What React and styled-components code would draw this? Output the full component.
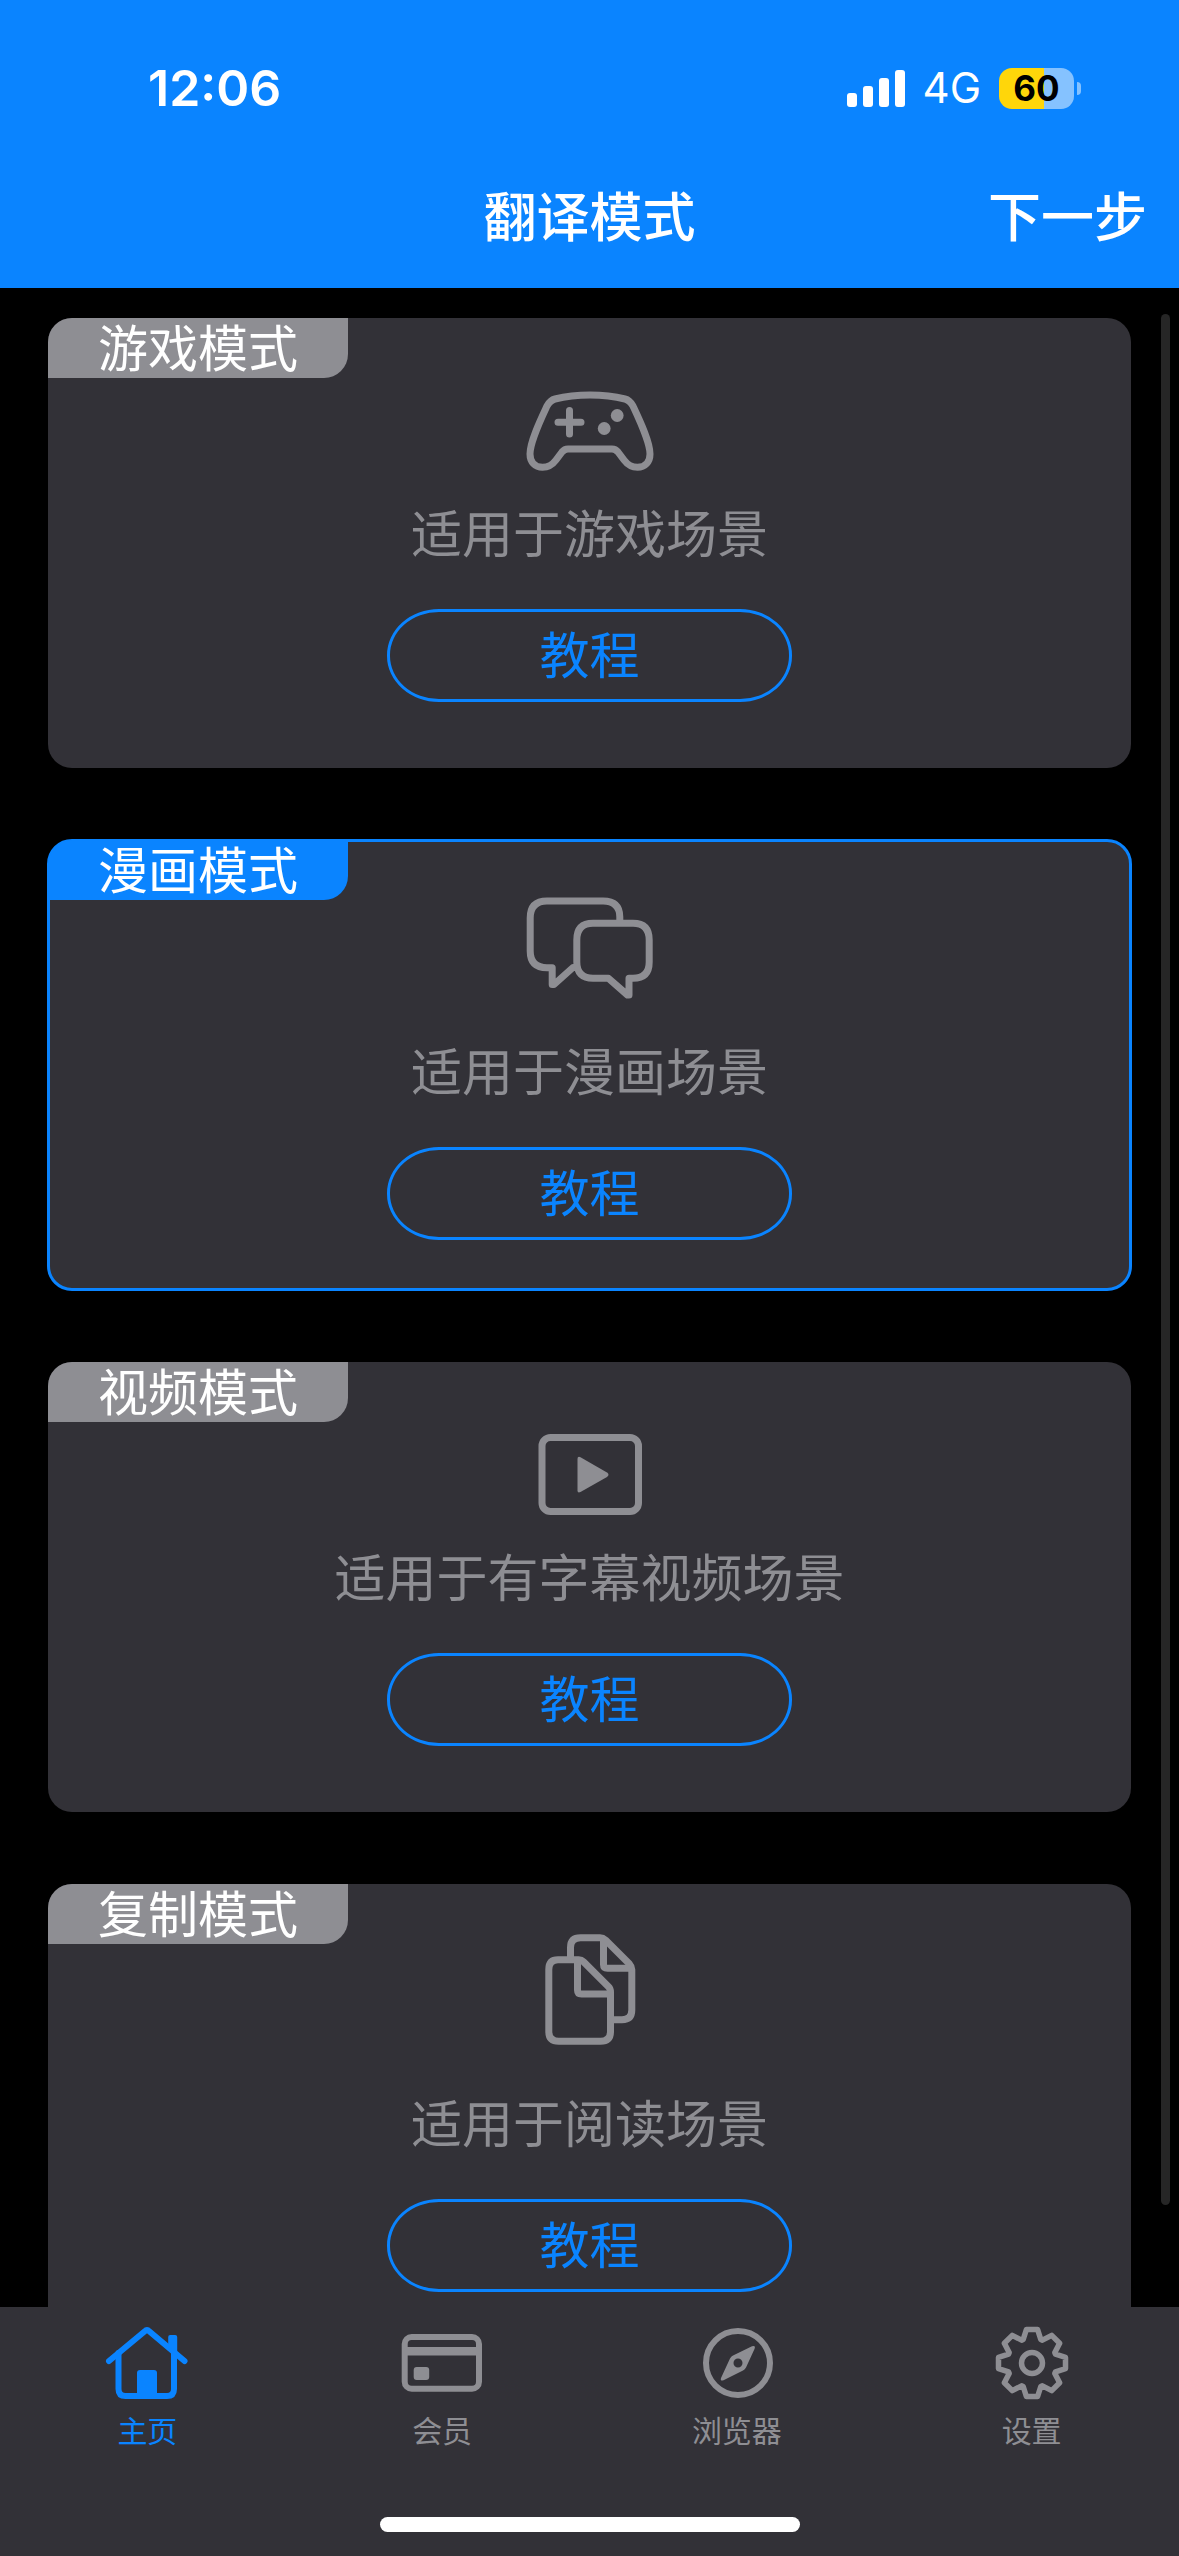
import { useState } from "react";
import styled, { createGlobalStyle } from "styled-components";

const BLUE = "#0a84ff";
const GRAY = "#8e8e93";
const PANEL = "#323137";

const GlobalStyle = createGlobalStyle`
  * {
    box-sizing: border-box;
  }
  body {
    margin: 0;
    background: #000;
    font-family: Inter, "Noto Sans CJK SC", sans-serif;
  }
  button {
    font-family: inherit;
    background: none;
    border: none;
    padding: 0;
    cursor: pointer;
  }
`;

const Screen = styled.div`
  display: flex;
  flex-direction: column;
  height: 100vh;
  overflow: hidden;
`;

const Header = styled.header`
  flex: none;
  background: ${BLUE};
  color: #fff;
`;

const StatusBar = styled.div`
  display: flex;
  align-items: center;
  justify-content: space-between;
  height: 176px;
  padding: 0 98px 0 148px;
`;

const Time = styled.span`
  font-size: 50px;
  line-height: 60px;
  font-weight: 600;
`;

const StatusIcons = styled.div`
  display: flex;
  align-items: center;
  gap: 18px;
`;

const Network = styled.span`
  font-size: 42px;
  line-height: 48px;
`;

const Battery = styled.div`
  display: flex;
  align-items: center;
  gap: 3px;
`;

const BatteryBody = styled.span`
  display: flex;
  align-items: center;
  justify-content: center;
  width: 75px;
  height: 41px;
  border-radius: 13px;
  background: linear-gradient(
    to right,
    #ffd60a ${(p) => p.$level}%,
    #85c2ff ${(p) => p.$level}%
  );
  color: #000;
  font-size: 35px;
  line-height: 41px;
  font-weight: 700;
`;

const BatteryNub = styled.span`
  width: 4px;
  height: 13px;
  border-radius: 0 4px 4px 0;
  background: #85c2ff;
`;

const TitleBar = styled.div`
  display: grid;
  grid-template-columns: 1fr auto 1fr;
  align-items: center;
  height: 84px;
  margin-bottom: 28px;
  padding: 0 32px;
`;

const Title = styled.h1`
  grid-column: 2;
  margin: 0;
  font-size: 53px;
  line-height: 84px;
  font-weight: 500;
`;

const NextButton = styled.button`
  justify-self: end;
  color: #fff;
  font-size: 53px;
  line-height: 84px;
  font-weight: 500;
`;

const Main = styled.main`
  position: relative;
  flex: 1;
  min-height: 0;
  overflow: hidden;
`;

const CardList = styled.div`
  display: flex;
  flex-direction: column;
  gap: 72px;
  padding: 30px 48px;
`;

const ScrollThumb = styled.div`
  position: absolute;
  top: 26px;
  right: 9px;
  bottom: 102px;
  width: 9px;
  border-radius: 5px;
  background: #262626;
`;

const Card = styled.section`
  position: relative;
  display: flex;
  flex-direction: column;
  align-items: center;
  justify-content: center;
  min-height: 450px;
  border-radius: 24px;
  background: ${PANEL};
  color: ${GRAY};
  outline: ${(p) => (p.$selected ? `3px solid ${BLUE}` : "none")};
  outline-offset: -2px;
`;

const CardTag = styled.h2`
  position: absolute;
  top: 0;
  left: 0;
  width: 300px;
  height: 60px;
  margin: 0;
  border-radius: 24px 0 24px 0;
  background: ${(p) => (p.$selected ? BLUE : GRAY)};
  color: #fff;
  font-size: 50px;
  line-height: 63px;
  font-weight: 400;
  text-align: center;
`;

const CardText = styled.p`
  margin: 25px 0 44px;
  font-size: 51px;
  line-height: 60px;
`;

const TutorialButton = styled.button`
  width: 405px;
  height: 93px;
  border: 3px solid ${BLUE};
  border-radius: 52px / 46px;
  color: ${BLUE};
  font-size: 50px;
  line-height: 60px;
`;

const Footer = styled.footer`
  display: flex;
  flex-direction: column;
  justify-content: space-between;
  align-items: center;
  flex: none;
  height: 249px;
  padding: 14px 0 24px;
  background: ${PANEL};
`;

const Tabs = styled.nav`
  display: grid;
  grid-template-columns: repeat(4, 1fr);
  width: 100%;
`;

const Tab = styled.a`
  display: flex;
  flex-direction: column;
  align-items: center;
  gap: 8px;
  color: ${(p) => (p.$active ? BLUE : GRAY)};
  font-size: 30px;
  line-height: 36px;
  text-decoration: none;
`;

const HomeIndicator = styled.div`
  width: 420px;
  height: 15px;
  border-radius: 8px;
  background: #fff;
`;

const Icon = styled.svg`
  display: block;
  fill: none;
  stroke: currentColor;
  stroke-width: ${(p) => p.$weight};
  stroke-linecap: round;
  stroke-linejoin: round;

  .solid {
    fill: currentColor;
    stroke: none;
  }

  .flat {
    stroke-linecap: butt;
  }
`;

function SignalIcon() {
  return (
    <svg width="58" height="37" viewBox="0 0 58 37" fill="#fff">
      <rect x="0" y="23" width="10" height="14" rx="3" />
      <rect x="16" y="16" width="10" height="21" rx="3" />
      <rect x="32" y="8" width="10" height="29" rx="3" />
      <rect x="48" y="0" width="10" height="37" rx="3" />
    </svg>
  );
}

function GameIcon() {
  return (
    <Icon $weight={7} width="144" height="96" viewBox="0 0 144 96">
      <path d="M72 11C60 11 47 12.500 37 15C33 16 31 18.500 29 22C22 37 12 58 12 70C12 78 17 83.300 24.500 83.300C31 83.300 35 80 38 76L44 68C46 65.500 47 65 50 65H94C97 65 98 65.500 100 68L106 76C109 80 113 83.300 119.500 83.300C127 83.300 132 78 132 70C132 58 122 37 115 22C113 18.500 111 16 107 15C97 12.500 84 11 72 11Z" />
      <path d="M40 38.300H63M51.500 26.500V50" />
      <circle className="solid" cx="99.200" cy="31.500" r="6.400" />
      <circle className="solid" cx="86.200" cy="44.500" r="6.400" />
    </Icon>
  );
}

function ComicIcon() {
  return (
    <Icon $weight={7} width="144" height="128" viewBox="0 0 144 128">
      <path
        className="flat"
        d="M101.800 30V27Q101.800 11 85 11H29Q12.200 11 12.200 28V61Q12.200 77.700 29 77.700H34.200V94.500H36L55 77.500H58"
      />
      <path d="M75 33.300H115Q131.200 33.300 131.200 50V72Q131.200 88.300 115 88.300H111V105H109.500L90.500 88.300H75Q58.800 88.300 58.800 72V50Q58.800 33.300 75 33.300Z" />
    </Icon>
  );
}

function VideoIcon() {
  return (
    <Icon $weight={7} width="144" height="96" viewBox="0 0 144 96">
      <rect x="24" y="9.500" width="96.500" height="74" rx="8.500" />
      <path
        className="solid"
        d="M59.500 31Q59.500 28 62.500 29.200L89 44.500Q92 46.700 89 49L62.500 64Q59.500 65.300 59.500 62.500Z"
      />
    </Icon>
  );
}

function CopyIcon() {
  return (
    <Icon $weight={7} width="144" height="144" viewBox="0 0 144 144">
      <path d="M40 33.700H60.800Q63.500 33.700 65.500 35.700L90.500 60.700Q92.500 62.700 92.500 66V105.500Q92.500 115.300 82.500 115.300H40.800Q30.800 115.300 30.800 105.500V43.500Q30.800 33.700 40 33.700Z" />
      <path d="M59.500 35V64Q59.500 68 63.500 68H91" />
      <path d="M52.500 31.500V21.500Q52.500 11.700 62.500 11.700H82Q85 11.700 87.500 14L111.500 38Q113.800 40.500 113.800 43.500V84Q113.800 93.700 104 93.700H95" />
      <path d="M85.500 14V38.500Q85.500 42.300 89.500 42.300H112" />
    </Icon>
  );
}

function HomeIcon() {
  return (
    <Icon $weight={6} width="84" height="84" viewBox="0 0 84 84">
      <path d="M4 40L39.500 10.500Q42 8 44.500 10.500L79.500 40" />
      <path d="M13.500 32V68Q13.500 75 20.500 75H62Q69 75 69 68V32" />
      <path className="solid" d="M63.200 28V16Q63.200 14 65.200 14H70.200Q72.200 14 72.200 16V36Z" />
      <rect className="solid" x="32" y="49" width="20" height="28" rx="3" />
    </Icon>
  );
}

function MemberIcon() {
  return (
    <Icon $weight={6} width="84" height="84" viewBox="0 0 84 84">
      <rect x="4.700" y="16" width="74.300" height="51.700" rx="7" />
      <rect className="solid" x="5" y="26" width="74" height="8.500" />
      <rect className="solid" x="13.700" y="46" width="15.500" height="13" rx="3" />
    </Icon>
  );
}

function BrowserIcon() {
  return (
    <Icon $weight={6} width="84" height="84" viewBox="0 0 84 84">
      <circle cx="43" cy="42" r="32" />
      <path
        className="solid"
        fillRule="evenodd"
        d="M57 25.300Q61 24 59.500 28L51 46.500Q50 48.500 48 49.500L28.500 59.300Q25 60.500 26 57L35 37.500Q36 35.500 38 34.500ZM43 37.500A4.500 4.500 0 1 0 43 46.500A4.500 4.500 0 1 0 43 37.500Z"
      />
    </Icon>
  );
}

// outline of one tooth, repeated eight times around the centre
const TOOTH = [
  [-8.8, -23.5],
  [-5.6, -33.5],
  [5.6, -33.5],
  [8.8, -23.5],
];

const gearPoints = [...Array(8).keys()]
  .flatMap((i) => {
    const a = (i * Math.PI) / 4;
    return TOOTH.map(
      ([x, y]) =>
        `${42 + x * Math.cos(a) - y * Math.sin(a)},${42 + x * Math.sin(a) + y * Math.cos(a)}`
    );
  })
  .join(" ");

function SettingsIcon() {
  return (
    <Icon $weight={5.5} width="84" height="84" viewBox="0 0 84 84">
      <polygon points={gearPoints} />
      <circle cx="42" cy="42" r="10.500" />
    </Icon>
  );
}

const modes = [
  { id: "game", name: "游戏模式", text: "适用于游戏场景", icon: GameIcon },
  { id: "comic", name: "漫画模式", text: "适用于漫画场景", icon: ComicIcon },
  { id: "video", name: "视频模式", text: "适用于有字幕视频场景", icon: VideoIcon },
  { id: "copy", name: "复制模式", text: "适用于阅读场景", icon: CopyIcon },
];

const tabs = [
  { href: "#home", name: "主页", icon: HomeIcon, active: true },
  { href: "#member", name: "会员", icon: MemberIcon },
  { href: "#browser", name: "浏览器", icon: BrowserIcon },
  { href: "#settings", name: "设置", icon: SettingsIcon },
];

export default function App() {
  const [selected, setSelected] = useState("comic");

  return (
    <Screen lang="zh-CN">
      <GlobalStyle />
      <Header>
        <StatusBar>
          <Time>12:06</Time>
          <StatusIcons>
            <SignalIcon />
            <Network>4G</Network>
            <Battery>
              <BatteryBody $level={60}>60</BatteryBody>
              <BatteryNub />
            </Battery>
          </StatusIcons>
        </StatusBar>
        <TitleBar>
          <Title>翻译模式</Title>
          <NextButton type="button">下一步</NextButton>
        </TitleBar>
      </Header>
      <Main>
        <CardList>
          {modes.map(({ id, name, text, icon: ModeIcon }) => (
            <Card
              key={id}
              $selected={id === selected}
              onClick={() => setSelected(id)}
            >
              <CardTag $selected={id === selected}>{name}</CardTag>
              <ModeIcon />
              <CardText>{text}</CardText>
              <TutorialButton type="button">教程</TutorialButton>
            </Card>
          ))}
        </CardList>
        <ScrollThumb />
      </Main>
      <Footer>
        <Tabs>
          {tabs.map(({ href, name, icon: TabIcon, active }) => (
            <Tab key={href} href={href} $active={active}>
              <TabIcon />
              {name}
            </Tab>
          ))}
        </Tabs>
        <HomeIndicator />
      </Footer>
    </Screen>
  );
}
